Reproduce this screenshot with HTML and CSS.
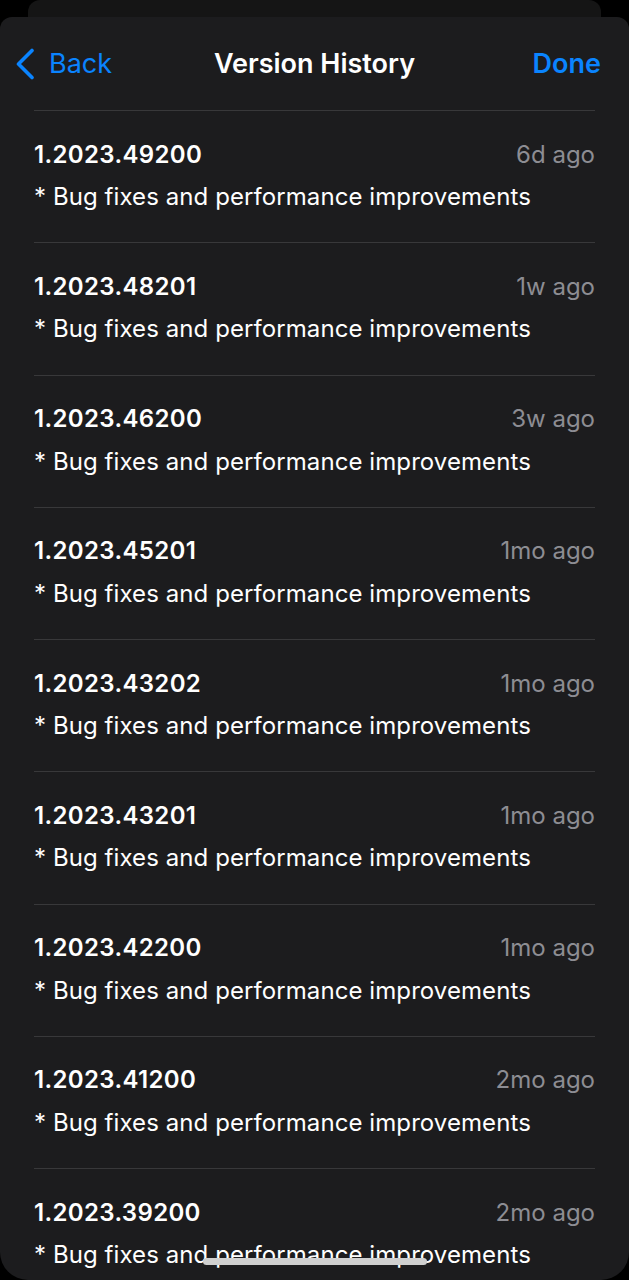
FILE: index.html
```html
<!DOCTYPE html>
<html>
<head>
<meta charset="utf-8">
<link rel="stylesheet" href="styles.css">
</head>
<body>
<div class="back-sheet"></div>
<div class="sheet">
  <header class="nav">
    <div class="nav-left">
      <svg class="chev" width="20" height="32" viewBox="0 0 20 32"><path d="M17 2.5 L3.5 16 L17 29.5" fill="none" stroke="#0a84ff" stroke-width="3.6" stroke-linecap="round" stroke-linejoin="round"/></svg>
      <span>Back</span>
    </div>
    <div class="nav-title">Version History</div>
    <div class="nav-right">Done</div>
  </header>
  <ul class="list">
    <li class="row"><div class="line"><span class="ver">1.2023.49200</span><span class="ago">6d ago</span></div><div class="desc">* Bug fixes and performance improvements</div></li>
    <li class="row"><div class="line"><span class="ver">1.2023.48201</span><span class="ago">1w ago</span></div><div class="desc">* Bug fixes and performance improvements</div></li>
    <li class="row"><div class="line"><span class="ver">1.2023.46200</span><span class="ago">3w ago</span></div><div class="desc">* Bug fixes and performance improvements</div></li>
    <li class="row"><div class="line"><span class="ver">1.2023.45201</span><span class="ago">1mo ago</span></div><div class="desc">* Bug fixes and performance improvements</div></li>
    <li class="row"><div class="line"><span class="ver">1.2023.43202</span><span class="ago">1mo ago</span></div><div class="desc">* Bug fixes and performance improvements</div></li>
    <li class="row"><div class="line"><span class="ver">1.2023.43201</span><span class="ago">1mo ago</span></div><div class="desc">* Bug fixes and performance improvements</div></li>
    <li class="row"><div class="line"><span class="ver">1.2023.42200</span><span class="ago">1mo ago</span></div><div class="desc">* Bug fixes and performance improvements</div></li>
    <li class="row"><div class="line"><span class="ver">1.2023.41200</span><span class="ago">2mo ago</span></div><div class="desc">* Bug fixes and performance improvements</div></li>
    <li class="row"><div class="line"><span class="ver">1.2023.39200</span><span class="ago">2mo ago</span></div><div class="desc">* Bug fixes and performance improvements</div></li>
  </ul>
  <div class="home-indicator"></div>
</div>
</body>
</html>
```
FILE: styles.css
```css
html, body {
  margin: 0;
  padding: 0;
  background: #000;
  height: 1280px;
  overflow: hidden;
}
body {
  font-family: Inter, "Liberation Sans", sans-serif;
  color: #fff;
}
.back-sheet {
  margin: 0 28px;
  height: 17px;
  background: #151515;
  border-radius: 12px 12px 0 0;
}
.sheet {
  position: relative;
  background: #1c1c1e;
  border-radius: 12px 12px 28px 28px;
  height: 1263px;
  overflow: hidden;
}
.nav {
  height: 93px;
  display: flex;
  align-items: center;
  justify-content: space-between;
  padding: 0 28px 0 15px;
  position: relative;
}
.nav-left {
  display: flex;
  align-items: center;
  gap: 14px;
  color: #0a84ff;
  font-size: 27px;
}
.chev { display: block; }
.nav-title {
  position: absolute;
  left: 0;
  right: 0;
  text-align: center;
  font-size: 27px;
  font-weight: 600;
  pointer-events: none;
}
.nav-right {
  color: #0a84ff;
  font-size: 27px;
  font-weight: 600;
}
.list {
  list-style: none;
  margin: 0 34px;
  padding: 0;
}
.row {
  box-sizing: border-box;
  height: 132.25px;
  border-top: 1px solid #38383a;
  padding-top: 29px;
}
.line {
  display: flex;
  justify-content: space-between;
  align-items: center;
  height: 28px;
}
.ver {
  font-size: 24px;
  font-weight: 600;
  letter-spacing: 0.35px;
}
.ago {
  font-size: 24px;
  color: #8d8d93;
}
.desc {
  margin-top: 15px;
  height: 28px;
  line-height: 28px;
  font-size: 24px;
  letter-spacing: 0.08px;
}
.home-indicator {
  position: absolute;
  left: 203px;
  width: 224px;
  top: 1241px;
  height: 7px;
  border-radius: 4px;
  background: #d0d0d0;
}
```
